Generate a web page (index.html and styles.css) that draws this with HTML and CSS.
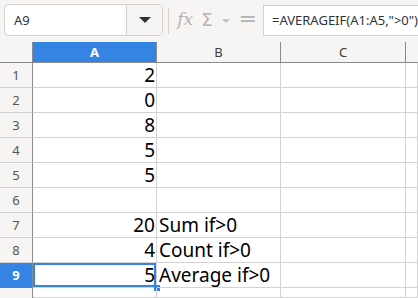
FILE: index.html
```html
<!DOCTYPE html>
<html lang="en">
<head>
  <meta charset="UTF-8">
  <title>AVERAGEIF sheet</title>
  <link rel="stylesheet" href="styles.css">
</head>
<body>
  <div class="toolbar">
    <div class="namebox">
      <span class="name">A9</span>
      <span class="drop"><span class="caret"></span></span>
    </div>
    <span class="sep"></span>
    <span class="fx">fx</span>
    <span class="sigma">&Sigma;</span>
    <span class="mini-caret"></span>
    <span class="equals">=</span>
    <div class="formula">=AVERAGEIF(A1:A5,"&gt;0")</div>
  </div>

  <div class="sheet">
    <div class="corner"></div>
    <div class="colhead active">A</div>
    <div class="colhead">B</div>
    <div class="colhead">C</div>
    <div class="colhead last"></div>

    <div class="rowhead">1</div><div class="cell num">2</div><div class="cell"></div><div class="cell"></div><div class="cell"></div>
    <div class="rowhead">2</div><div class="cell num">0</div><div class="cell"></div><div class="cell"></div><div class="cell"></div>
    <div class="rowhead">3</div><div class="cell num">8</div><div class="cell"></div><div class="cell"></div><div class="cell"></div>
    <div class="rowhead">4</div><div class="cell num">5</div><div class="cell"></div><div class="cell"></div><div class="cell"></div>
    <div class="rowhead">5</div><div class="cell num">5</div><div class="cell"></div><div class="cell"></div><div class="cell"></div>
    <div class="rowhead">6</div><div class="cell"></div><div class="cell"></div><div class="cell"></div><div class="cell"></div>
    <div class="rowhead">7</div><div class="cell num">20</div><div class="cell">Sum if&gt;0</div><div class="cell"></div><div class="cell"></div>
    <div class="rowhead">8</div><div class="cell num">4</div><div class="cell">Count if&gt;0</div><div class="cell"></div><div class="cell"></div>
    <div class="rowhead active">9</div><div class="cell num selected">5<span class="handle"></span></div><div class="cell">Average if&gt;0</div><div class="cell"></div><div class="cell"></div>
    <div class="rowhead cut"></div><div class="cell"></div><div class="cell"></div><div class="cell"></div><div class="cell"></div>
  </div>
</body>
</html>
```

FILE: styles.css
```css
body { margin: 0; font-family: "Noto Sans", sans-serif; background: #fff; overflow: hidden; }

.toolbar { height: 42px; background: #f6f5f4; display: flex; align-items: center; padding-left: 4px; box-sizing: border-box; }
.namebox { width: 162px; height: 32px; margin-top: -2px; box-sizing: border-box; border: 1px solid #d5d0cc; border-radius: 5px; background: #fff; display: flex; overflow: hidden; }
.namebox .name { flex: 1; font-size: 13px; color: #2e3436; padding-left: 9px; line-height: 30px; }
.namebox .drop { width: 35px; border-left: 1px solid #d5d0cc; background: #f6f5f4; display: flex; align-items: center; justify-content: center; }
.caret { width: 0; height: 0; border-left: 6px solid transparent; border-right: 6px solid transparent; border-top: 6px solid #2e3436; }
.sep { width: 1px; height: 26px; background: #d5d0cc; margin: 0 8px 0 5px; }
.fx { font-family: "DejaVu Serif", serif; font-style: italic; font-size: 17px; color: #b5b3b1; margin-top: -4px; }
.sigma { font-family: "DejaVu Sans", sans-serif; font-size: 18px; color: #b5b3b1; margin-left: 8px; margin-top: -4px; }
.mini-caret { width: 0; height: 0; border-left: 4px solid transparent; border-right: 4px solid transparent; border-top: 4px solid #c4c2c0; margin-left: 9px; }
.equals { font-family: "DejaVu Sans", sans-serif; font-size: 22px; color: #b5b3b1; margin-left: 9px; margin-top: -5px; }
.formula { flex: 1; height: 31px; margin-left: 6px; margin-top: -2px; box-sizing: border-box; border: 1px solid #d5d0cc; border-right: none; background: #fff; font-size: 13px; color: #2e3436; padding-left: 8px; line-height: 29px; white-space: nowrap; }

.sheet { display: grid; grid-template-columns: 33px 124px 124px 125px 12px; grid-template-rows: 21px repeat(9, 25px) 10px; overflow: hidden; }
.corner { background: #f6f5f4; border-right: 1px solid #8d8b8a; border-bottom: 1px solid #8d8b8a; }
.colhead { background: #f6f5f4; border-right: 1px solid #8d8b8a; border-bottom: 1px solid #8d8b8a; font-size: 13px; color: #3d3d3d; text-align: center; line-height: 20px; }
.colhead.last { border-right: none; }
.colhead.active { background: #3584e4; color: #fff; font-weight: bold; }
.rowhead { background: #f6f5f4; border-right: 1px solid #8d8b8a; border-bottom: 1px solid #d3d3d3; font-size: 13px; color: #555; text-align: center; line-height: 25px; }
.rowhead.active { background: #3584e4; color: #fff; font-weight: bold; border-bottom-color: #3584e4; }
.rowhead.cut { border-bottom: none; }
.cell { position: relative; border-right: 1px solid #d3d3d3; border-bottom: 1px solid #d3d3d3; font-size: 19px; color: #000; line-height: 24px; padding: 0 1px 0 2px; white-space: nowrap; }
.cell.num { text-align: right; }
.cell.selected { box-shadow: inset 0 0 0 2px #3584e4; }
.handle { position: absolute; right: -4px; bottom: -4px; width: 6px; height: 6px; background: #3584e4; }
```
